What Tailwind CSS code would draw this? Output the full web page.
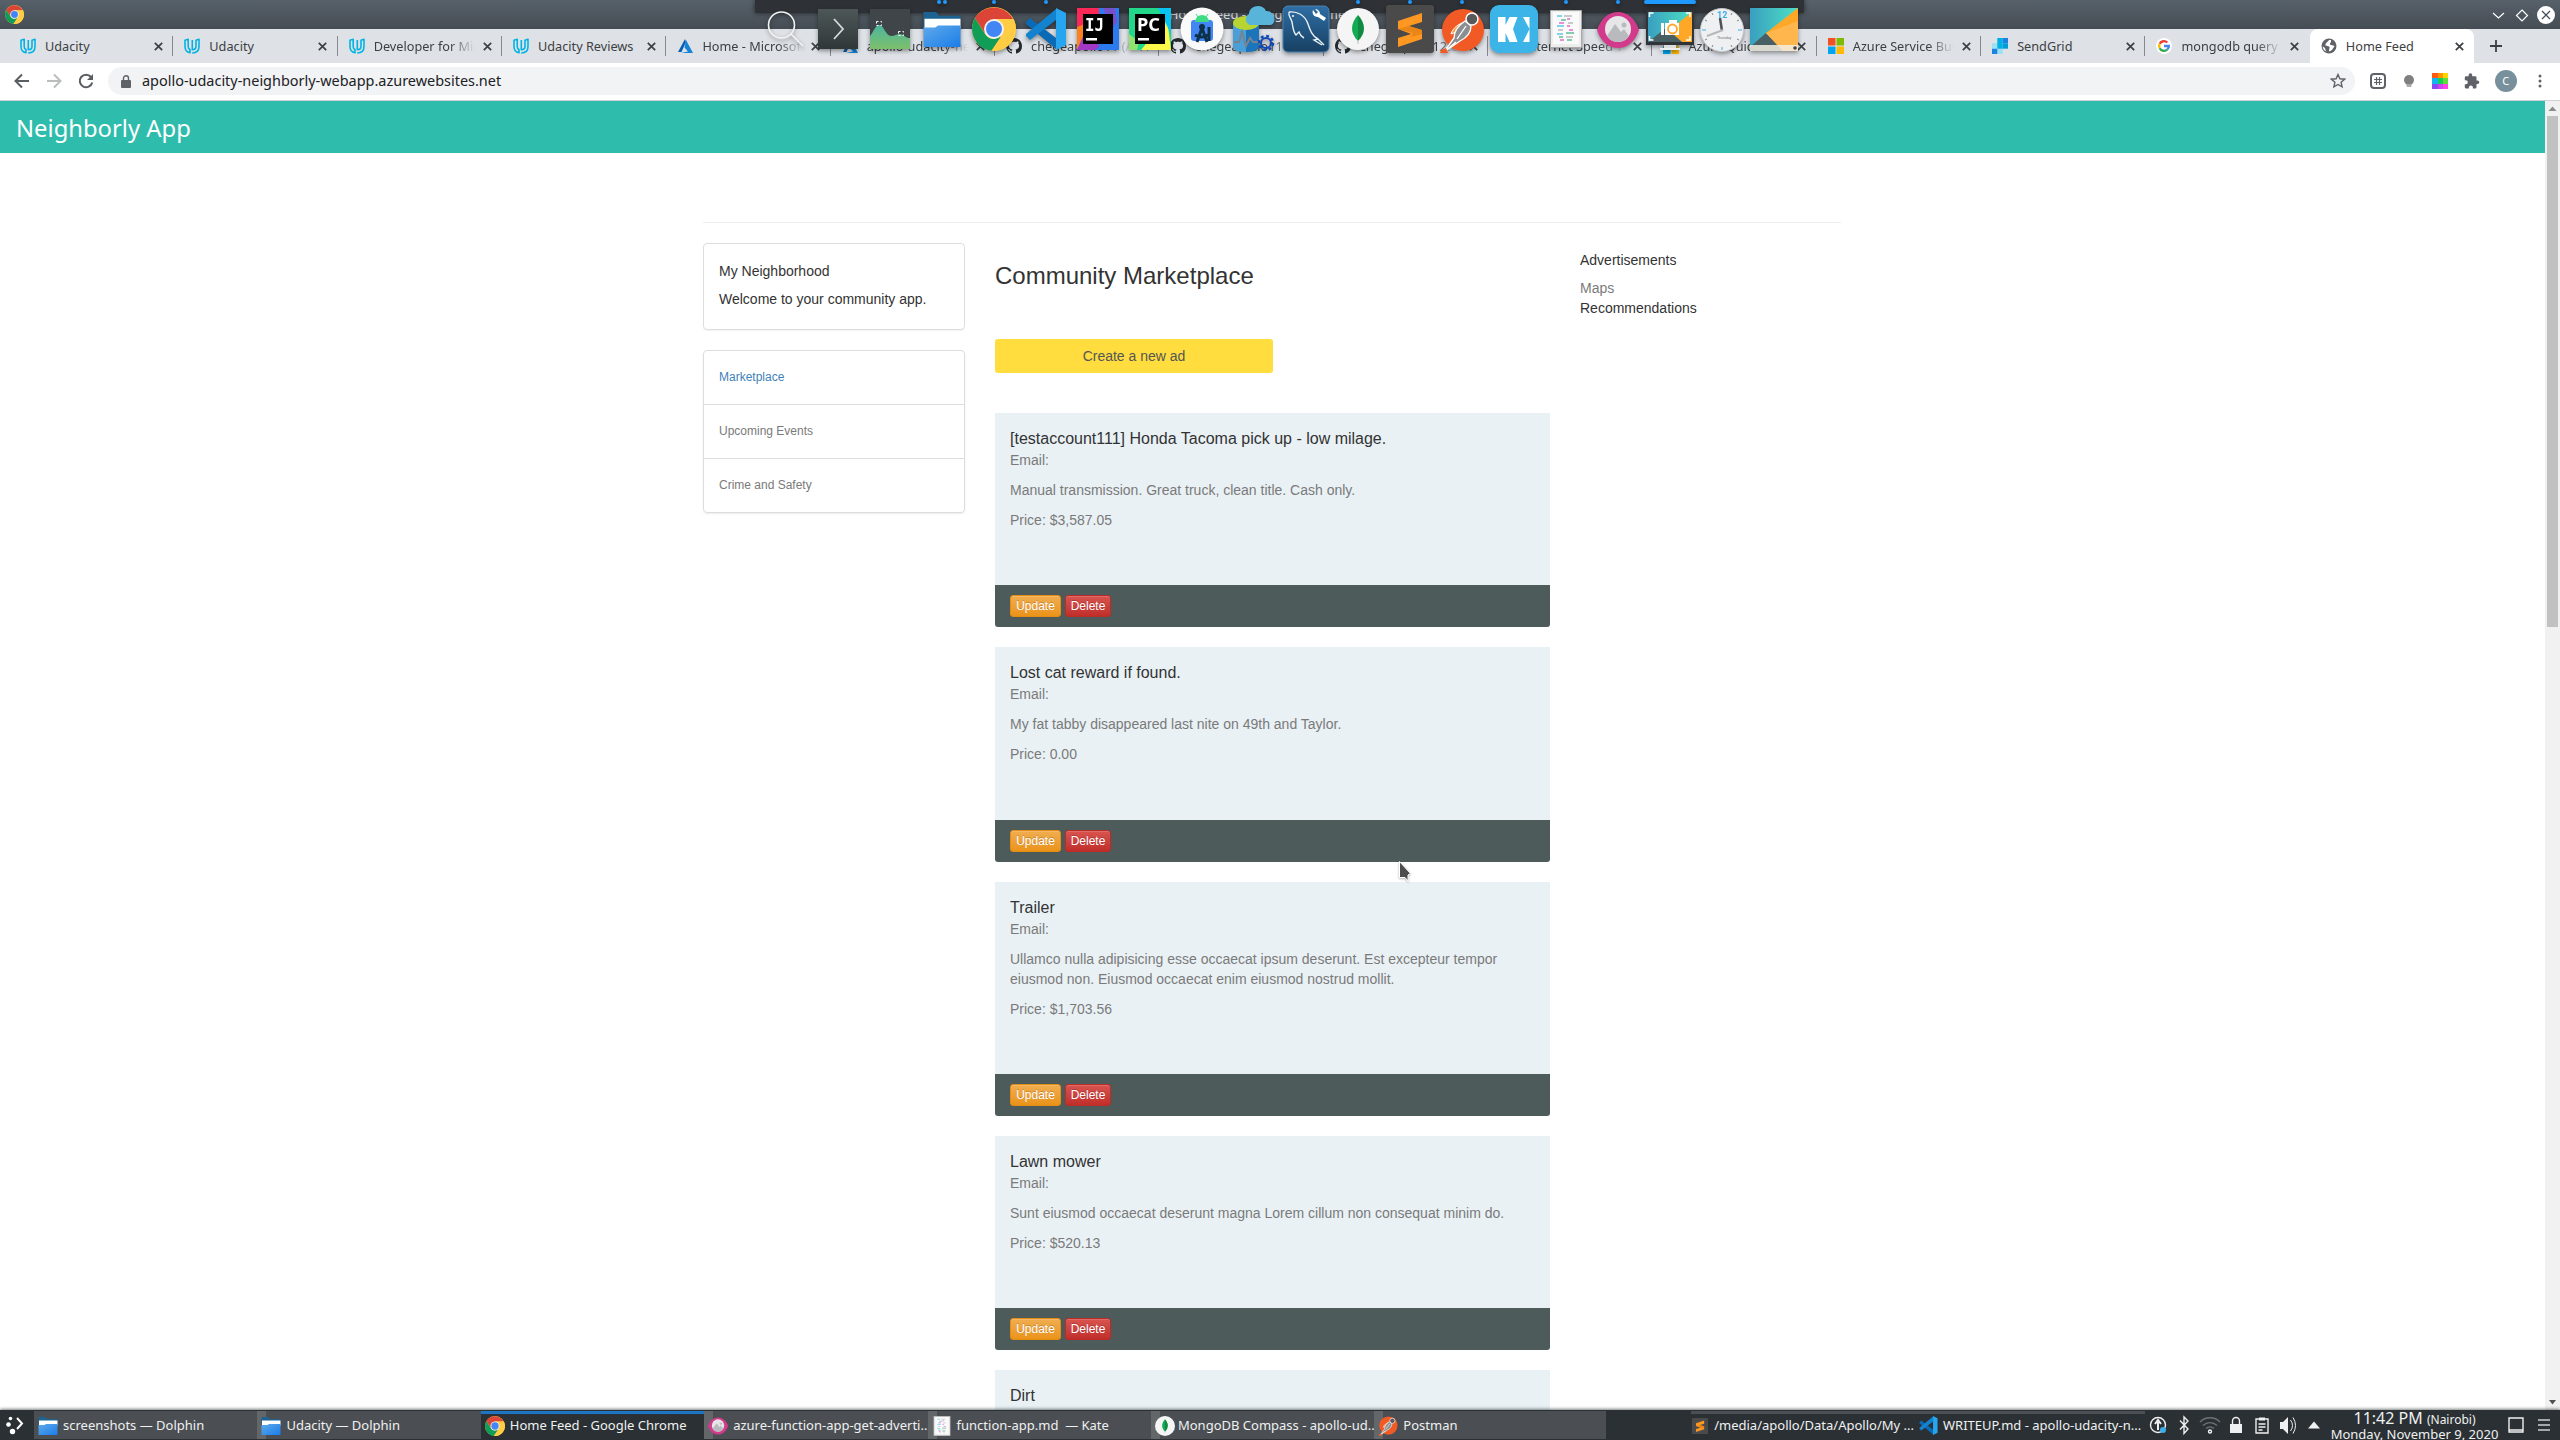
<!DOCTYPE html>
<html lang="en">
<head>
<meta charset="utf-8">
<title>Home Feed</title>
<script src="https://cdn.jsdelivr.net/npm/@tailwindcss/browser@4"></script>
</head>
<body class="relative w-[2560px] h-[1440px] overflow-hidden bg-white flex flex-col font-['Noto_Sans',sans-serif]">

<!-- shared icon symbols -->
<svg class="absolute size-0">
  <symbol id="udacity" viewBox="0 0 16 16"><g fill="none" stroke="#02b3e4" stroke-width="1.600" stroke-linejoin="round"><path d="M1 2.200v6.300c0 3.400 1.800 5.600 5 6.300v-3.300c-1.200-.5-1.800-1.600-1.800-3V1.200z"/><path d="M8.200 15c4.300 0 6.800-2.400 6.800-6.500V1.200l-3 1v6.300c0 2-1.200 3.200-3.700 3.200V2"/></g></symbol>
  <symbol id="azure" viewBox="0 0 16 16"><path d="M8 1L1 14h3.500L9 4z" fill="#0a5fb0"/><path d="M9 2l7 13H4l7-1.500-3.500-4z" fill="#1583d8"/></symbol>
  <symbol id="github" viewBox="0 0 16 16"><path fill="#24292e" d="M8 0C3.580 0 0 3.580 0 8c0 3.540 2.290 6.530 5.470 7.590.4.070.55-.17.55-.38 0-.19-.01-.82-.01-1.490-2.010.37-2.530-.49-2.690-.94-.09-.23-.48-.94-.82-1.130-.28-.15-.68-.52-.01-.53.63-.01 1.080.58 1.230.82.72 1.210 1.870.87 2.330.66.070-.52.28-.87.51-1.070-1.780-.2-3.640-.89-3.640-3.950 0-.87.31-1.590.82-2.150-.08-.2-.36-1.020.08-2.120 0 0 .67-.21 2.200.82.640-.18 1.320-.27 2-.27s1.360.09 2 .27c1.530-1.040 2.200-.82 2.200-.82.44 1.100.16 1.920.08 2.120.51.56.82 1.270.82 2.150 0 3.070-1.870 3.750-3.650 3.950.29.25.54.73.54 1.480 0 1.070-.01 1.930-.01 2.200 0 .21.15.46.55.38A8.010 8.010 0 0016 8c0-4.420-3.580-8-8-8z"/></symbol>
  <symbol id="speed" viewBox="0 0 16 16"><circle cx="8" cy="8" r="7" fill="#2a3a52"/></symbol>
  <symbol id="ms" viewBox="0 0 16 16"><path fill="#f25022" d="M0 0h7.500v7.500H0z"/><path fill="#7fba00" d="M8.500 0H16v7.500H8.500z"/><path fill="#00a4ef" d="M0 8.500h7.500V16H0z"/><path fill="#ffb900" d="M8.500 8.500H16V16H8.500z"/></symbol>
  <symbol id="sendgrid" viewBox="0 0 16 16"><path fill="#99e1f4" d="M0 5.300h5.300v5.400H0zM5.300 10.700h5.400V16H5.300z"/><path fill="#00b2e3" d="M5.300 5.300h5.400v5.400H5.300zM5.300 0h5.400v5.300H5.300z"/><path fill="#009dd9" d="M10.700 5.300H16v5.400h-5.300z"/><path fill="#1a82e2" d="M0 10.700h5.300V16H0zM10.700 0H16v5.300h-5.300z"/></symbol>
  <symbol id="google" viewBox="0 0 48 48"><circle cx="24" cy="24" r="24" fill="#fff"/><g fill="none" stroke-width="7"><path stroke="#ea4335" d="M11 17.500A14.500 14.500 0 0 1 34 13.500"/><path stroke="#fbbc05" d="M11 17.500a14.500 14.500 0 0 0 0 13"/><path stroke="#34a853" d="M11 30.500a14.500 14.500 0 0 0 23 4"/><path stroke="#4285f4" d="M34 34.500c3-2.800 4.500-6 4.500-10.500H24"/></g></symbol>
  <symbol id="globe" viewBox="0 0 16 16"><circle cx="8" cy="8" r="7.500" fill="#5f6368"/><path fill="#fff" d="M8 2C7 4 4 5 4.500 7.500c1 .5 3 0 4 1.500.5 1.500-1 2-.5 4.500 3-.5 4-3 5.500-5.500C12 7 10 7.500 9 6.500 8.500 5 10.500 4.500 10 2zM1.700 8.500c1.300.5 2.800 1.500 2.800 3.500l1 1.500C3 12.500 1.700 11 1.700 8.500z"/></symbol>
  <symbol id="chrome" viewBox="0 0 44 44"><circle cx="22" cy="22" r="22" fill="#fc4"/><path fill="#db4437" d="M22 12h19a22 22 0 0 0-38-1l10.300 16z"/><path fill="#0f9d58" d="M3 11a22 22 0 0 0 16.500 32.800L29 29.500 22 32c-4 0-7-2-9-5z"/><path fill="#fc4" d="M22 12h19.500A22 22 0 0 1 19.500 43.900L31 27c2-5 0-11-9-15z"/><circle cx="22" cy="22" r="10" fill="#f1f1f1"/><circle cx="22" cy="22" r="8" fill="#4285f4"/></symbol>
  <linearGradient id="gfold" x1="0" y1="0" x2="1" y2="1"><stop stop-color="#5fa9ea"/><stop offset="1" stop-color="#1a7de8"/></linearGradient>
  <symbol id="folder" viewBox="0 0 40 38"><path fill="#1d6391" d="M1 1h13l3 4h22v14H1z"/><path fill="#fff" d="M2 8h37v10H2z"/><path fill="url(#gfold)" d="M1 17h12l3-2h23v22H1z"/></symbol>
  <symbol id="mongo" viewBox="0 0 42 42"><circle cx="21" cy="21" r="21" fill="#f5f5f5"/><path fill="#13aa52" d="M21 7c-8 9-8 18 0 26z"/><path fill="#108a43" d="M21 7c8 9 8 18 0 26z"/><path stroke="#b8c4c2" d="M21 32v4"/></symbol>
  <symbol id="sublime" viewBox="0 0 48 48"><rect width="48" height="48" rx="3" fill="#4a4a4a"/><path fill="#ff9822" d="M12 16l24-8v9l-13 4 13 4v9l-24 8v-9l13-4-13-5z"/><path fill="#e07f12" d="M23 21l13 4v4l-11 3 2-4-15-4z" opacity=".7"/></symbol>
  <symbol id="postman" viewBox="0 0 44 46"><circle cx="23" cy="22" r="21" fill="#f15a24"/><circle cx="32" cy="11" r="6" fill="#58595b" stroke="#fff" stroke-width="1.500"/><path fill="#ff9a3c" stroke="#fff" d="M11 26c2-6 7-10 14-12l-4 8z"/><path fill="#8b8f91" stroke="#fff" stroke-width="1.300" d="M25 13l6 5c0 7-5 12-11 15L4 44l10-14c0-7 5-13 11-17z"/><path stroke="#fff" stroke-width="1.300" d="M26 18l-9 13M4 44l12-10"/><path fill="#f15a24" d="M1 42l5-2 2 5H0z"/></symbol>
  <symbol id="gwen" viewBox="0 0 42 36"><path fill="#d23b8c" d="M0 18C4 6 12 0 21 0s17 6 21 18c-4 12-12 18-21 18S4 30 0 18z"/><circle cx="21" cy="17" r="13" fill="#e6e6e8"/><path fill="#b9babd" d="M10 24l8-12 6 8 3-3 5 7a13 13 0 0 1-22 0z"/><circle cx="27" cy="13" r="2.500" fill="#b9babd"/></symbol>
  <symbol id="kate" viewBox="0 0 32 38"><path fill="#ededee" stroke="#aaa" d="M.5.500h31v37H.5z"/><path fill="#fafafa" d="M3 2h26v32H3z"/><g stroke-width="1.300"><path stroke="#5cc8e8" d="M7 6h5M7 16h7M7 24h6"/><path stroke="#bbb" d="M14 6h8M18 13h5M8 20h5M16 27h7"/><path stroke="#e86ad0" d="M17 9h3M9 13h5M17 16h3M19 20h4M10 30h4"/><path stroke="#5bbf9a" d="M11 10h5M16 23h8M9 27h4M17 30h5"/></g></symbol>
  <symbol id="vscode" viewBox="0 0 42 42"><path fill="#0b6ab5" d="M1 14l4-4 26 20v11L1 16z"/><path fill="#1483cf" d="M1 28l4 4L31 12V1L1 26z"/><path fill="#27a5ee" d="M31 0l10 5v32l-10 5z"/></symbol>
</svg>

<!-- window title bar -->
<header class="h-[29px] shrink-0 flex items-center justify-between bg-linear-to-b from-[#57616a] to-[#454c54] px-[5px]">
  <svg class="size-[19px]"><use href="#chrome"/></svg>
  <span class="text-[13px] text-[#e0e2e4]">Home Feed - Google Chrome</span>
  <svg class="w-[65px] h-[20px]" viewBox="0 0 65 20" fill="none" stroke="#fff" stroke-width="1.200"><path d="M3 8l5.500 5L14 8M32 5l5.500 5.500-5.500 5.500-5.500-5.500z"/><circle cx="56" cy="10" r="9" fill="#fff" stroke="none"/><path stroke="#454c54" d="M52 6l8 8M60 6l-8 8"/></svg>
</header>

<!-- tabs -->
<nav class="h-[34px] shrink-0 flex bg-[#dee1e6] pl-[9px]" id="tabs"></nav>

<!-- toolbar -->
<div class="h-[38px] shrink-0 flex items-center bg-white border-b border-[#cfd1d4] pl-[14px] pr-[12px] pb-px">
  <svg class="w-[94px] h-[20px] shrink-0" viewBox="0 0 94 20" fill="none" stroke-width="2"><path stroke="#5a5d61" d="M15 10H2M8 3.500L1.500 10 8 16.500"/><path stroke="#babcbe" d="M33 10h13M40 3.500l6.500 6.500-6.500 6.500"/><path stroke="#5a5d61" d="M77 6a6.300 6.300 0 1 0 1.200 5.500"/><path fill="#5a5d61" stroke="none" d="M79 3v6h-6z"/></svg>
  <div class="h-[28px] w-[2247px] shrink-0 rounded-full bg-[#f1f3f4] flex items-center pl-[13px] pr-[9px]">
    <svg class="w-[10px] h-[13px]" viewBox="0 0 10 13"><path fill="#5f6368" d="M1 5h8q1 0 1 1v6q0 1-1 1H1q-1 0-1-1V6q0-1 1-1z"/><path fill="none" stroke="#5f6368" stroke-width="1.400" d="M2.500 5V3.200a2.500 2.500 0 0 1 5 0V5"/></svg>
    <span class="ml-[11px] text-[14.450px] leading-[20px] pb-px text-[#202124] flex-1">apollo-udacity-neighborly-webapp.azurewebsites.net</span>
    <svg class="size-[16px]" viewBox="0 0 16 16"><path fill="none" stroke="#5f6368" stroke-width="1.400" d="M8 1.500l1.900 4.300 4.700.4-3.500 3.100 1 4.600L8 11.500l-4.100 2.400 1-4.600L1.400 6.200l4.700-.4z"/></svg>
  </div>
  <div class="flex-1 flex items-center justify-between pl-[15px]">
    <svg class="size-4" viewBox="0 0 16 16" fill="none" stroke="#5f6368"><rect x="1" y="1" width="14" height="14" rx="3" stroke-width="2"/><path stroke-width="1.200" d="M6.500 4v8M9.500 4v8M4 6.500h8M4 9.500h8"/></svg>
    <svg class="size-4" viewBox="0 0 16 16"><circle cx="8" cy="7" r="5" fill="#808080"/><path fill="#aaa" d="M5 11h6l-1 3H6z"/></svg>
    <div class="size-4 grid grid-cols-3"><i class="bg-[#ff5a14]"></i><i class="bg-[#ff9500]"></i><i class="bg-[#ffd400]"></i><i class="bg-[#12b5f0]"></i><i class="bg-[#12d05a]"></i><i class="bg-[#62dc3c]"></i><i class="bg-[#8b47f5]"></i><i class="bg-[#d042f0]"></i><i class="bg-[#ff42ea]"></i></div>
    <svg class="size-4" viewBox="0 0 16 16"><path fill="#5f6368" d="M13.500 7.500h-1V4.500q0-1.300-1.300-1.300h-3V2a1.800 1.800 0 0 0-3.600 0v1.200H2Q.8 3.200.8 4.500v2.800h1a2 2 0 0 1 0 4h-1v3q0 1.300 1.200 1.300h2.900v-1a2 2 0 0 1 4 0v1h2.300q1.300 0 1.300-1.300v-3.200h1a1.800 1.800 0 0 0 0-3.600z"/></svg>
    <span class="size-[22px] rounded-full bg-[#78909c] text-white text-[11px] flex items-center justify-center">C</span>
    <svg class="w-4 h-4" viewBox="0 0 16 16" fill="#5f6368"><circle cx="8" cy="3" r="1.500"/><circle cx="8" cy="8" r="1.500"/><circle cx="8" cy="13" r="1.500"/></svg>
  </div>
</div>

<!-- web page viewport -->
<div class="h-[1309px] shrink-0 flex overflow-hidden">
  <main class="flex-1 h-full overflow-hidden font-['Liberation_Sans',sans-serif] text-[14px] leading-[20px] text-[#333]">
    <div class="h-[52px] bg-[#2ebdac] text-white text-[23.800px] leading-[54px] pl-[16px] font-['Noto_Sans',sans-serif]">Neighborly App</div>
    <div class="w-[1138px] ml-[703px] mt-[69px] border-t border-[#eee] pt-[20px] grid grid-cols-[262px_555px_260px] gap-x-[30px] items-start">
      <aside class="flex flex-col gap-5">
        <section class="h-[87px] border border-[#ddd] rounded-[4px] shadow-[0_1px_1px_rgba(0,0,0,0.05)] px-[15px] pt-[17px] flex flex-col gap-2">
          <p>My Neighborhood</p><p>Welcome to your community app.</p>
        </section>
        <ul class="border border-[#ddd] rounded-[4px] shadow-[0_1px_2px_rgba(0,0,0,0.08)] text-[12px] text-[#7a7a7a] divide-y divide-[#ddd]">
          <li class="h-[54px] px-[15px] pb-[2px] flex items-center text-[#3f82b8]">Marketplace</li>
          <li class="h-[54px] px-[15px] pb-[2px] flex items-center">Upcoming Events</li>
          <li class="h-[53px] px-[15px] pb-[1px] flex items-center">Crime and Safety</li>
        </ul>
      </aside>
      <section>
        <h1 class="text-[24px] leading-[26px] pt-[20px]">Community Marketplace</h1>
        <button class="block mt-[50px] mb-[40px] w-[278px] h-[34px] rounded-[3px] bg-[#ffdd3f] text-[#555]">Create a new ad</button>
        <div id="ads" class="flex flex-col gap-5"></div>
      </section>
      <aside class="pt-[7px]">
        <p>Advertisements</p><p class="mt-2 text-[#7a7a7a]">Maps</p><p>Recommendations</p>
      </aside>
    </div>
  </main>
  <div class="w-[15px] bg-[#f1f1f1] flex flex-col items-center">
    <svg class="h-[15px] w-[15px]" viewBox="0 0 15 15"><path fill="#8a8a8a" d="M3.500 10h8l-4-4.500z"/></svg>
    <div class="w-[11px] h-[511px] bg-[#c1c1c1]"></div>
    <svg class="h-[15px] w-[15px] mt-auto" viewBox="0 0 15 15"><path fill="#505050" d="M4 5h7l-3.500 4.500z"/></svg>
  </div>
</div>

<!-- desktop panel -->
<footer class="relative h-[30px] shrink-0 bg-[#2b3034] shadow-[0_-1px_3px_rgba(30,40,35,0.6)] flex items-stretch text-[13px] text-[#eff0f1]">
  <svg class="w-[34px] h-[30px] shrink-0" viewBox="0 0 34 30"><g fill="#fff"><circle cx="10.500" cy="8.500" r="1.800"/><circle cx="8.500" cy="14.500" r="2.300"/><circle cx="12.500" cy="21.500" r="2.700"/></g><path fill="none" stroke="#fff" stroke-width="2" d="M17 8l5 5.500-5 5.500"/></svg>
  <div class="w-[1657px] shrink-0 flex pb-px pt-px" id="tasks"></div>
  <div class="w-[454px] shrink-0 flex mt-px border-t-[3px] border-[#4b4f53] h-[29px] pb-[3px]">
    <div class="w-[223px] flex items-center pl-px"><svg class="size-[22px]"><use href="#sublime"/></svg><span class="ml-[6px] whitespace-nowrap">/media/apollo/Data/Apollo/My ...</span></div>
    <div class="flex-1 flex items-center pl-[5px]"><svg class="size-[19px]"><use href="#vscode"/></svg><span class="ml-[5px] whitespace-nowrap">WRITEUP.md - apollo-udacity-n...</span></div>
  </div>
  <svg class="w-[186px] h-[30px] shrink-0" viewBox="2145 0 186 30" fill="none" stroke="#eff0f1" stroke-width="1.400">
    <circle cx="2158" cy="15" r="7.500"/><path d="M2158 20v-8M2155 14l3-4 3 4" stroke-width="2"/><circle cx="2163" cy="20" r="3" fill="#3daee9" stroke="none"/>
    <path d="M2180 10.500l8 8.500-4 4.500V7l4 4-8 8.500"/>
    <g stroke="#6d7276"><path d="M2200 12a14 14 0 0 1 20 0M2203 15.500a10 10 0 0 1 14 0M2206 18.500a6 6 0 0 1 8 0"/></g><circle cx="2210" cy="21.500" r="1.500"/>
    <path fill="#eff0f1" stroke="none" d="M2230 14h12v9h-12z"/><path d="M2232.500 14v-3a3.500 3.500 0 0 1 7 0v3"/>
    <path d="M2256 9h12v14h-12zM2258.500 14h7M2258.500 17h7M2258.500 20h4"/><path stroke-width="3" d="M2259 9h6"/>
    <path fill="#eff0f1" stroke="none" d="M2280 12h3l5-5v17l-5-5h-3z"/><path d="M2290.500 10q4 5.500 0 11M2293 7.500q5 8 0 16" stroke-width="1"/>
    <path fill="#eff0f1" stroke="none" d="M2308 18.500h12l-6-7z"/>
  </svg>
  <div class="w-[165px] shrink-0 flex flex-col items-center pl-[2px]">
    <div class="text-[16px] leading-[17px] whitespace-nowrap">11:42 PM <span class="text-[12px]">(Nairobi)</span></div>
    <div class="text-[13px] leading-[12px] whitespace-nowrap">Monday, November 9, 2020</div>
  </div>
  <svg class="w-[60px] h-[30px] shrink-0" viewBox="0 0 60 30" fill="none" stroke="#eff0f1"><path stroke-width="1.400" d="M13 8h14v14H13zM13 20h14"/><path stroke="#a5a8aa" stroke-width="2" d="M42 10h12M42 15h12M42 20h12"/></svg>
</footer>

<!-- launcher dock over the window -->
<div class="absolute left-[755px] top-0 w-[1049px] h-[13px] bg-[#2e3135] shadow-[0_0_5px_rgba(0,0,0,0.6)]"></div>
<svg class="absolute left-[755px] top-0 w-[1060px] h-[62px] drop-shadow-[0_2px_2px_rgba(0,0,0,0.4)]" viewBox="755 0 1060 62">
  <defs>
    <linearGradient id="g1" x1="0" y1="0" x2="0" y2="1"><stop stop-color="#4bb5a0"/><stop offset="1" stop-color="#7dbf6a"/></linearGradient>
    <linearGradient id="g2" x1="0" y1="0" x2="0" y2="1"><stop stop-color="#2f6ea5"/><stop offset="1" stop-color="#174062"/></linearGradient>
    <linearGradient id="g3" x1="0" y1="0" x2="0" y2="1"><stop stop-color="#4d5758"/><stop offset="1" stop-color="#303739"/></linearGradient>
    <linearGradient id="g4"><stop stop-color="#3a9fc0"/><stop offset="1" stop-color="#4ce0c4"/></linearGradient>
  </defs>
  <g fill="#1d99ff"><circle cx="939" cy="2" r="2"/><circle cx="945" cy="2" r="2"/><circle cx="994" cy="2" r="2"/><circle cx="1046" cy="2" r="2"/><circle cx="1358" cy="2" r="2"/><circle cx="1410" cy="2" r="2"/><circle cx="1462" cy="2" r="2"/><circle cx="1566" cy="2" r="2"/><circle cx="1618" cy="2" r="2"/><rect x="1644" width="52" height="4" rx="2"/></g>
  <g fill="none" stroke="#f2f3f3" stroke-width="1.600"><circle cx="781.500" cy="25" r="13"/><path d="M791 34l12 12"/></g>
  <path fill="url(#g3)" d="M818 9h40v40h-40z"/><path fill="none" stroke="#d5d9da" stroke-width="1.800" d="M834 19l9 10-9 10"/>
  <path fill="#3f4549" d="M870 9h40v40h-40z"/><path fill="url(#g1)" d="M870 36c4-5 6-12 10-11s6 11 11 11 8-4 12-1 5 3 7 3v11h-40z"/><path fill="none" stroke="#fff" stroke-dasharray="2 2" d="M876.500 21.500h5v4h-5zM898.500 31.500h5v4h-5z"/>
  <use href="#folder" x="922" y="11" width="40" height="37"/>
  <use href="#chrome" x="972" y="7" width="44" height="44"/>
  <use href="#vscode" x="1025" y="8" width="42" height="42"/>
  <path fill="#2a7bf0" d="M1077 8h42v42h-42z"/><path fill="#fe2857" d="M1077 8h22v8l-22 14z"/><path fill="#7650c8" d="M1103 8h12l2 14-5 6z"/><path fill="#fc801d" d="M1077 27l8-3v24l-8 2z"/><path fill="#a138c8" d="M1077 50l7-16 16 12-5 4z"/><path d="M1083 14h30v30h-30z"/>
  <path fill="#21d789" d="M1129 8h42v42h-42z"/><path fill="#fcf84a" d="M1141 50l26-32 4 32z"/><path fill="#07c3f2" d="M1158 8h13v26l-6-12z"/><path fill="#8ee46e" d="M1129 34l10 8-2 8h-8z"/><path d="M1135 14h30v30h-30z"/>
  <g fill="#fff" font-family="'DejaVu Sans Mono', monospace" font-weight="bold" font-size="17"><text x="1085" y="31" textLength="19" lengthAdjust="spacingAndGlyphs">IJ</text></g><g fill="#fff" font-family="'Noto Sans', sans-serif" font-weight="bold" font-size="17"><text x="1137" y="31" textLength="23" lengthAdjust="spacingAndGlyphs">PC</text></g><path fill="#fff" d="M1086 38h11v2.500h-11zM1138 38h11v2.500h-11z"/>
  <circle cx="1202" cy="29" r="21.500" fill="#fafafa"/><rect x="1191" y="20" width="22" height="21" rx="3" fill="#4285f4"/><path fill="#3ddc84" d="M1195 22a7 7 0 0 1 14 0z"/><path stroke="#3ddc84" d="M1196 14l2 3M1208 14l-2 3"/><path fill="none" stroke="#0d3148" stroke-width="3" d="M1197 42l5-14 5 14M1195 35q7 4 13 0M1209 27v14"/><circle cx="1202" cy="27" r="3" fill="#0d3148"/>
  <path fill="#4b9fd8" d="M1233 23h13v29q-13 0-13-5z"/><path fill="#1c74ba" d="M1246 23h13v24q0 5-13 5z"/><ellipse cx="1246" cy="23" rx="13" ry="7" fill="#b8d432"/><path fill="none" stroke="#77848e" stroke-width="2" d="M1234 42h5l3-10 4 14 4-8 3 4h5"/><path fill="#59b4d9" d="M1250 25a6 6 0 0 1-1-11c0-9 14-11 17-3 9-1 12 14 3 14z"/><circle cx="1266" cy="43" r="5" fill="none" stroke="#0d47b8" stroke-width="2"/><circle cx="1266" cy="43" r="7" fill="none" stroke="#0d47b8" stroke-width="2.500" stroke-dasharray="2.750 2.750"/>
  <rect x="1283" y="6" width="46" height="46" rx="5" fill="url(#g2)" stroke="#4c84b4"/><path fill="none" stroke="#e8f0f5" stroke-width="1.400" d="M1289 12c8-1 16 3 19 12 2 6 4 12 10 15l6 6M1289 12c-1 4 2 6 3 10 1 5 1 10 4 13l3-3c1 3 3 5 5 6M1318 39l-4 1 8 5"/><circle cx="1293" cy="16" r="1" fill="#fff"/><path fill="#fff" d="M1313 10a5 5 0 0 0 5 7l6 4 2-3-6-4a5 5 0 0 0-5-5l3 3-2 2z"/>
  <use href="#mongo" x="1337" y="8" width="42" height="42"/>
  <use href="#sublime" x="1386" y="5" width="48" height="48"/>
  <use href="#postman" x="1440" y="8" width="44" height="46"/>
  <rect x="1490" y="5" width="48" height="48" rx="9" fill="#3db4e7"/>
  <path fill="#fff" d="M1498 17h7.500v8l4-8h8l-4.500 12 4.500 13h-8l-4-9v9h-7.500z"/><path fill="#fff" d="M1523 17h6.500v12zM1529.500 29v13h-6.500z"/>
  <use href="#kate" x="1550" y="9" width="32" height="40"/>
  <use href="#gwen" x="1597" y="12" width="42" height="36"/>
  <path fill="#303438" d="M1646 10h48v35h-48z"/><path fill="url(#g4)" d="M1648 12h44v30h-44z"/><path fill="#ffa726" d="M1692 12v30h-10l-14-11z"/><path fill="#485f63" d="M1648 42l18-14 16 14z"/><path fill="#fff" d="M1661 23h3v12h-3zM1665 23h4v-3h8v3h2v12h-14z"/><circle cx="1672.500" cy="29" r="4.500" fill="#fff" stroke="#ffa726" stroke-width="1.800"/><path fill="none" stroke="#fff" stroke-width="1.500" d="M1649.500 17v-4h4M1686 13h4v4M1649.500 36v4h4M1686 40h4v-4"/><path fill="#ddd" d="M1664 45h12v3h-12z"/><path fill="#eee" d="M1660 48h20v2h-20z"/>
  <circle cx="1722" cy="30" r="21.500" fill="#eff0f1" stroke="#c6c9cb"/><g stroke="#78868c"><path d="M1722 47v3" stroke="#3daee9"/><path d="M1702 30h4M1738 30h4" stroke="#3daee9"/><path d="M1712 13l1 2M1732 13l-1 2M1705 20l2 1M1739 20l-2 1M1705 40l2-1M1739 40l-2-1M1712 47l1-2M1732 47l-1-2"/></g><text x="1717" y="18" font-size="9" font-weight="bold" fill="#3daee9" font-family="Roboto, sans-serif">12</text><path stroke="#4d5357" stroke-width="2.500" d="M1722 31l-2-13"/><path stroke="#b5b8ba" stroke-width="2" d="M1723 30l-16 6"/><text x="1717" y="39" font-size="3.500" fill="#777" font-family="Roboto, sans-serif">Thursday</text>
  <path fill="url(#g4)" d="M1750 8h48v43h-48z"/><path fill="#485f63" d="M1750 51V47l16-14 20 18z"/><path fill="#ffa726" d="M1798 8v43h-15l-17-18z"/><path fill="#ffb74d" d="M1766 33l32-12v30h-15z"/><path fill="#f3ede2" opacity=".85" d="M1750 45h48v6h-48z"/><circle cx="1795" cy="48" r="1.800" fill="#444"/>
</svg>

<!-- pointer -->
<svg class="absolute left-[1398px] top-[860px] w-[16px] h-[23px] drop-shadow-[0_1px_1px_rgba(0,0,0,0.3)]" viewBox="0 0 16 23"><path fill="#4d4d4d" stroke="#fff" d="M1.500 1.500l11 12-2.500 1.500v6l-3-3.500H1.500z"/></svg>

<script>
const tabs = [['udacity','Udacity'],['udacity','Udacity'],['udacity','Developer for Mic'],['udacity','Udacity Reviews'],['azure','Home - Microsoft'],['azure','apollo-udacity-nei'],['github','chegeapollo11 (A'],['github','chegeapollo11 / n'],['github','chegeapollo12/az'],['speed','Internet Speed Te'],['ms','Azure Quickstart'],['ms','Azure Service Bus'],['sendgrid','SendGrid'],['google','mongodb query s'],['globe','Home Feed']];
document.getElementById('tabs').innerHTML = tabs.map(([icon, name], i) => {
  const active = i === tabs.length - 1;
  const shell = active ? 'bg-white rounded-t-[8px]' : '';
  const edge = active || i === tabs.length - 2 ? '' : '<i class="absolute right-0 top-[7px] h-[20px] w-px bg-[#85898f]"></i>';
  const fade = name.length > 14 && name !== 'Udacity Reviews' ? 'mask-r-from-75% mask-r-to-100%' : '';
  return `<div class="relative w-[164.350px] shrink-0 flex items-center pl-[11px] ${shell}">
    <svg class="size-4 shrink-0"><use href="#${icon}"/></svg>
    <span class="ml-[9px] w-[101px] shrink-0 overflow-hidden whitespace-nowrap text-[12.700px] leading-[18px] text-[#3c4043] ${fade}">${name}</span>
    <svg class="ml-[8px] size-[9px] shrink-0" viewBox="0 0 9 9"><path stroke="#3c4043" stroke-width="1.700" d="M.8.800l7.400 7.400M8.200.800L.8 8.200"/></svg>${edge}</div>`;
}).join('') + '<svg class="ml-[16px] mt-[11px] size-[12px]" viewBox="0 0 12 12"><path stroke="#3c4043" stroke-width="1.800" d="M6 0v12M0 6h12"/></svg>';

const ads = [['[testaccount111] Honda Tacoma pick up - low milage.','Manual transmission. Great truck, clean title. Cash only.','$3,587.05'],['Lost cat reward if found.','My fat tabby disappeared last nite on 49th and Taylor.','0.00'],['Trailer','Ullamco nulla adipisicing esse occaecat ipsum deserunt. Est excepteur tempor eiusmod non. Eiusmod occaecat enim eiusmod nostrud mollit.','$1,703.56'],['Lawn mower','Sunt eiusmod occaecat deserunt magna Lorem cillum non consequat minim do.','$520.13']];
document.getElementById('ads').innerHTML = ads.map(([t, d, p]) => `<article class="bg-[#e9f1f5] rounded-b-[3px] overflow-hidden">
  <div class="px-[15px] pt-[17px] pb-[55.300px] text-[#7a7a7a]"><h2 class="text-[16px] leading-[18px] text-[#333] mb-[2px]">${t}</h2><p>Email:</p><p class="mt-[10px]">${d}</p><p class="mt-[10px]">Price: ${p}</p></div>
  <div class="h-[42px] bg-[#4d5b5b] px-[15px] flex items-center gap-1 text-[12px] leading-[18px] text-white">
    <button class="h-[22px] w-[51px] rounded-[3px] border border-[#e38d13] bg-linear-to-b from-[#f0ad4e] to-[#eb9316] flex items-center justify-center text-shadow-[0_-1px_0_rgba(0,0,0,0.2)] shadow-[inset_0_1px_0_rgba(255,255,255,0.15)]">Update</button>
    <button class="h-[22px] w-[46px] rounded-[3px] border border-[#b92c28] bg-linear-to-b from-[#d9534f] to-[#c12e2a] flex items-center justify-center text-shadow-[0_-1px_0_rgba(0,0,0,0.2)] shadow-[inset_0_1px_0_rgba(255,255,255,0.15)]">Delete</button>
  </div></article>`).join('') + '<article class="h-[214px] bg-[#e9f1f5] px-[15px] pt-[17px]"><h2 class="text-[16px] leading-[18px]">Dirt</h2></article>';

const tasks = [['folder','screenshots — Dolphin'],['folder','Udacity — Dolphin'],['chrome','Home Feed - Google Chrome'],['gwen','azure-function-app-get-adverti...'],['kate','function-app.md  — Kate'],['mongo','MongoDB Compass - apollo-ud...'],['postman','Postman']];
document.getElementById('tasks').innerHTML = tasks.map(([icon, name], i) => {
  const look = i === 2 ? 'bg-[#2b3034] border-t-[3px] border-[#1d75c4]' : 'bg-[#4b4f53] pt-[3px]';
  const seam = i > 0 && i !== 2 ? 'border-l-[9px] border-l-[#636769]' : '';
  const pad = i === 0 || i === 2 ? 'pl-[4px]' : '-ml-[5px]';
  const size = i === 6 ? 'w-[232px]' : 'w-[223.400px]';
  const gap = i === 5 ? 'ml-[3px]' : 'ml-[5px]';
  return `<div class="relative h-[28px] shrink-0 ${size} ${look} ${seam} pb-[1px]"><div class="flex items-center h-full ${pad}"><svg class="size-[20px] shrink-0"><use href="#${icon}"/></svg><span class="${gap} whitespace-pre">${name}</span></div></div>`;
}).join('');
</script>
</body>
</html>
